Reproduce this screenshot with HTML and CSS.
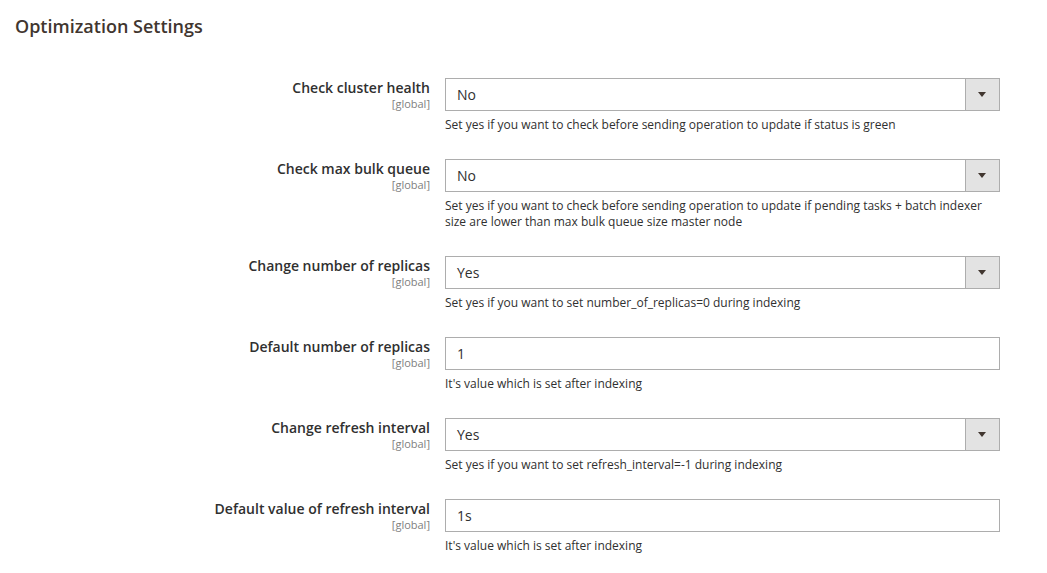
FILE: index.html
```html
<!DOCTYPE html>
<html>
<head>
<meta charset="utf-8">
<link rel="stylesheet" href="styles.css">
</head>
<body>
<div class="page">
  <h2 class="section-title">Optimization Settings</h2>
  <div class="fields">
    <div class="field">
      <div class="label-col"><div class="label">Check cluster health</div><div class="scope">[global]</div></div>
      <div class="control-col">
        <div class="select"><span class="value">No</span><span class="arrow"></span></div>
        <div class="note">Set yes if you want to check before sending operation to update if status is green</div>
      </div>
    </div>
    <div class="field">
      <div class="label-col"><div class="label">Check max bulk queue</div><div class="scope">[global]</div></div>
      <div class="control-col">
        <div class="select"><span class="value">No</span><span class="arrow"></span></div>
        <div class="note">Set yes if you want to check before sending operation to update if pending tasks + batch indexer size are lower than max bulk queue size master node</div>
      </div>
    </div>
    <div class="field">
      <div class="label-col"><div class="label">Change number of replicas</div><div class="scope">[global]</div></div>
      <div class="control-col">
        <div class="select"><span class="value">Yes</span><span class="arrow"></span></div>
        <div class="note">Set yes if you want to set number_of_replicas=0 during indexing</div>
      </div>
    </div>
    <div class="field">
      <div class="label-col"><div class="label">Default number of replicas</div><div class="scope">[global]</div></div>
      <div class="control-col">
        <div class="input"><span class="value">1</span></div>
        <div class="note">It's value which is set after indexing</div>
      </div>
    </div>
    <div class="field">
      <div class="label-col"><div class="label">Change refresh interval</div><div class="scope">[global]</div></div>
      <div class="control-col">
        <div class="select"><span class="value">Yes</span><span class="arrow"></span></div>
        <div class="note">Set yes if you want to set refresh_interval=-1 during indexing</div>
      </div>
    </div>
    <div class="field">
      <div class="label-col"><div class="label">Default value of refresh interval</div><div class="scope">[global]</div></div>
      <div class="control-col">
        <div class="input"><span class="value">1s</span></div>
        <div class="note">It's value which is set after indexing</div>
      </div>
    </div>
  </div>
</div>
</body>
</html>
```

FILE: styles.css
```css
* { box-sizing: border-box; }
html, body { margin: 0; padding: 0; background: #fff; }
body { font-family: "Open Sans", "Noto Sans", sans-serif; color: #303030; }
.page { padding: 15px 47px 0 15px; }
.section-title {
  margin: 0;
  font-size: 18px;
  font-weight: 600;
  line-height: 22px;
  color: #41362f;
}
.fields { padding-top: 41px; }
.field { display: flex; gap: 15px; margin-bottom: 26px; }
.label-col { width: 415px; text-align: right; }
.label { font-size: 14px; font-weight: 600; line-height: 19px; color: #303030; }
.scope { font-size: 11px; line-height: 13px; color: #808080; }
.control-col { flex: 1; }
.select, .input {
  display: flex;
  height: 33px;
  border: 1px solid #adadad;
  background: #fff;
}
.value { flex: 1; padding-left: 11px; font-size: 14px; line-height: 31px; color: #303030; }
.arrow {
  width: 34px;
  border-left: 1px solid #adadad;
  background: #e3e3e3;
  position: relative;
}
.arrow::after {
  content: "";
  position: absolute;
  left: 12px;
  top: 13px;
  border-left: 4px solid transparent;
  border-right: 4px solid transparent;
  border-top: 5px solid #41362f;
}
.note { margin-top: 6px; font-size: 12px; line-height: 16px; color: #303030; max-width: 545px; }
```
